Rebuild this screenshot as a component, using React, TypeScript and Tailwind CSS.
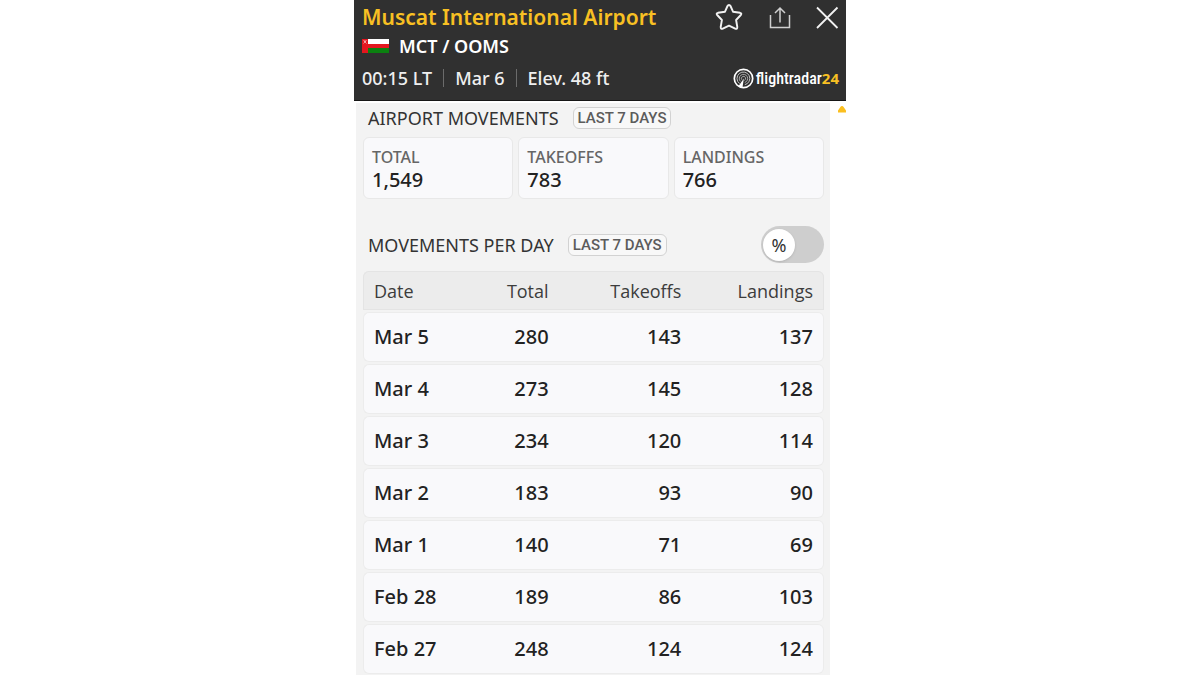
import React from 'react'

const STATS = [
  { label: 'TOTAL', value: '1,549' },
  { label: 'TAKEOFFS', value: '783' },
  { label: 'LANDINGS', value: '766' },
]

const DAYS = [
  { date: 'Mar 5', total: 280, takeoffs: 143, landings: 137 },
  { date: 'Mar 4', total: 273, takeoffs: 145, landings: 128 },
  { date: 'Mar 3', total: 234, takeoffs: 120, landings: 114 },
  { date: 'Mar 2', total: 183, takeoffs: 93, landings: 90 },
  { date: 'Mar 1', total: 140, takeoffs: 71, landings: 69 },
  { date: 'Feb 28', total: 189, takeoffs: 86, landings: 103 },
  { date: 'Feb 27', total: 248, takeoffs: 124, landings: 124 },
]

function OmanFlag() {
  return (
    <svg width="27" height="14" viewBox="0 0 27 14" role="img" aria-label="Oman">
      <rect width="27" height="14" fill="#e3171f" />
      <rect x="6" width="21" height="5" fill="#fff" />
      <rect x="6" y="9" width="21" height="5" fill="#0b8110" />
      <path d="M1.5 1.5l3 3M4.5 1.5l-3 3M3 1v2" stroke="#f6b9bb" strokeWidth=".8" />
    </svg>
  )
}

function RadarLogo() {
  return (
    <svg width="21" height="21" viewBox="0 0 21 21" fill="none" stroke="#fff" aria-hidden="true">
      <circle cx="10.5" cy="10.5" r="9.2" strokeWidth="1.7" />
      <path d="M6.6 15.6A6.4 6.4 0 1 1 11.8 16.7" strokeWidth=".9" stroke="#d0d0d0" />
      <path d="M7.4 13.4A4.2 4.2 0 1 1 11.8 14.5" strokeWidth=".8" stroke="#c4c4c4" />
      <path d="M8.9 11.8A2.1 2.1 0 1 1 11.3 12.4" strokeWidth=".8" stroke="#c4c4c4" />
      <path d="M10.9 10.4L5.2 18.4L9.4 19.8Z" fill="#fff" stroke="none" />
    </svg>
  )
}

function Header() {
  return (
    <header className="border-b border-[#161616] bg-[#303030] pt-[3px] pr-[7px] pb-2 pl-2 text-white">
      <div className="flex items-start justify-between">
        <h1 className="text-[21px] leading-7 font-semibold text-[#f8c023]">Muscat International Airport</h1>
        <div className="flex items-center gap-6">
          <button type="button" aria-label="Add to favourites" className="mr-0.5">
            <svg width="28" height="28" viewBox="0 0 28 28" fill="none" stroke="#f2f2f2" strokeWidth="1.9" strokeLinejoin="round">
              <path d="M14 2Q15 2 15.5 3L18 8.7L25 9.8Q27.2 10.4 25.8 12L21.1 17L22.3 24Q22.3 26.6 20.2 25.6L14 22.6L7.8 25.6Q5.7 26.6 5.7 24L6.9 17L2.2 12Q.8 10.4 3 9.8L10 8.7L12.5 3Q13 2 14 2Z" />
            </svg>
          </button>
          <button type="button" aria-label="Share">
            <svg width="22" height="24" viewBox="0 0 22 24" fill="none" stroke="#cfcfcf" strokeWidth="1.5">
              <path d="M1.5 10V22.5H20.5V10M11 17.5V3M6 8L11 3L16 8" />
            </svg>
          </button>
          <button type="button" aria-label="Close">
            <svg width="24" height="24" viewBox="0 0 24 24" fill="none" stroke="#f2f2f2" strokeWidth="1.8">
              <path d="M2 2.5L22.5 23M22.5 2.5L2 23" />
            </svg>
          </button>
        </div>
      </div>
      <div className="mt-px flex items-center gap-2.5 text-lg leading-7 font-semibold">
        <OmanFlag />
        <span>MCT / OOMS</span>
      </div>
      <div className="flex items-center justify-between pt-1">
        <div className="flex items-center gap-[11px] text-lg leading-7 font-medium text-[#efefef]">
          <span>00:15 LT</span>
          <span className="h-[18px] w-px bg-[#6b6b6b]" />
          <span>Mar 6</span>
          <span className="h-[18px] w-px bg-[#6b6b6b]" />
          <span>Elev. 48 ft</span>
        </div>
        <div className="flex items-center gap-0.5 leading-6">
          <RadarLogo />
          <span className="flex items-baseline">
            <span className="font-['Roboto_Condensed','Liberation_Sans',sans-serif] text-base leading-6 font-medium">flightradar</span>
            <span className="font-['Open_Sans',sans-serif] text-[15px] font-bold text-[#f8c023]">24</span>
          </span>
        </div>
      </div>
    </header>
  )
}

function SectionTitle({ children }: { children: React.ReactNode }) {
  return (
    <div className="flex items-center gap-[14px] pl-[5px]">
      <h2 className="text-lg leading-6 text-[#333]">{children}</h2>
      <span className="rounded-md border border-[#d2d2d2] bg-[#f8f8f8] px-1 font-[Roboto,sans-serif] text-[15px] leading-5 font-medium text-[#5c5c5c]">
        LAST 7 DAYS
      </span>
    </div>
  )
}

function PercentSwitch() {
  return (
    <label className="flex h-[37px] w-[63px] cursor-pointer items-center rounded-full bg-[#cecece] p-0.5 has-checked:justify-end">
      <input type="checkbox" role="switch" aria-label="Show percentages" className="sr-only" />
      <span className="flex size-8 items-center justify-center rounded-full bg-white text-lg text-[#333] shadow">%</span>
    </label>
  )
}

const HEAD_CELL = "border-y border-[#e4e4e4] font-['Open_Sans',sans-serif] font-normal"
const CELL = 'border-y border-[#ececec]'

export default function App() {
  return (
    <main className="mx-auto flex min-h-screen w-full max-w-[492px] flex-col bg-white font-['Noto_Sans',sans-serif]">
      <Header />
      <div className="flex flex-1 pt-0.5 pl-0.5">
        <div className="min-w-0 flex-1 bg-[#f3f3f3] pt-[3px] pr-1.5 pl-[7px]">
          <SectionTitle>AIRPORT MOVEMENTS</SectionTitle>
          <dl className="mt-[7px] grid grid-cols-3 gap-[5px]">
            {STATS.map((stat) => (
              <div key={stat.label} className="rounded-md border border-[#e8e8e8] bg-[#f9f9fb] px-2 pt-2 pb-1.5 font-medium">
                <dt className="text-base leading-[22px] text-[#666]">{stat.label}</dt>
                <dd className="text-xl leading-6 text-[#222]">{stat.value}</dd>
              </div>
            ))}
          </dl>

          <div className="mt-[27px] flex items-center justify-between">
            <SectionTitle>MOVEMENTS PER DAY</SectionTitle>
            <PercentSwitch />
          </div>
          <table className="mt-1.5 w-full table-fixed border-separate border-spacing-x-0 border-spacing-y-0.5">
            <thead>
              <tr className="h-[39px] bg-[#ececec] text-lg text-[#3c3c3c]">
                <th scope="col" className={`${HEAD_CELL} w-3/14 rounded-tl-md border-l pl-2.5 text-left`}>Date</th>
                <th scope="col" className={`${HEAD_CELL} pr-3 text-right`}>Total</th>
                <th scope="col" className={`${HEAD_CELL} w-2/7 pr-[11px] text-right`}>Takeoffs</th>
                <th scope="col" className={`${HEAD_CELL} w-2/7 rounded-tr-md border-r pr-2.5 text-right`}>Landings</th>
              </tr>
            </thead>
            <tbody>
              {DAYS.map((day) => (
                <tr key={day.date} className="h-[50px] text-xl font-medium text-[#222] *:bg-[#f9f9fb]">
                  <td className={`${CELL} rounded-l-md border-l pl-2.5 whitespace-nowrap`}>{day.date}</td>
                  <td className={`${CELL} pr-3 text-right`}>{day.total}</td>
                  <td className={`${CELL} pr-[11px] text-right`}>{day.takeoffs}</td>
                  <td className={`${CELL} rounded-r-md border-r pr-2.5 text-right`}>{day.landings}</td>
                </tr>
              ))}
            </tbody>
          </table>
        </div>

        {/* scroll marker in the gutter */}
        <div className="flex w-4 justify-end pt-[3px]">
          <svg width="8" height="7" viewBox="0 0 8 7" aria-hidden="true">
            <path d="M4 0Q5 0 5.8 1.2L8 4.4V6.5H0V4.4L2.2 1.2Q3 0 4 0Z" fill="#fbbf1f" />
          </svg>
        </div>
      </div>
    </main>
  )
}
